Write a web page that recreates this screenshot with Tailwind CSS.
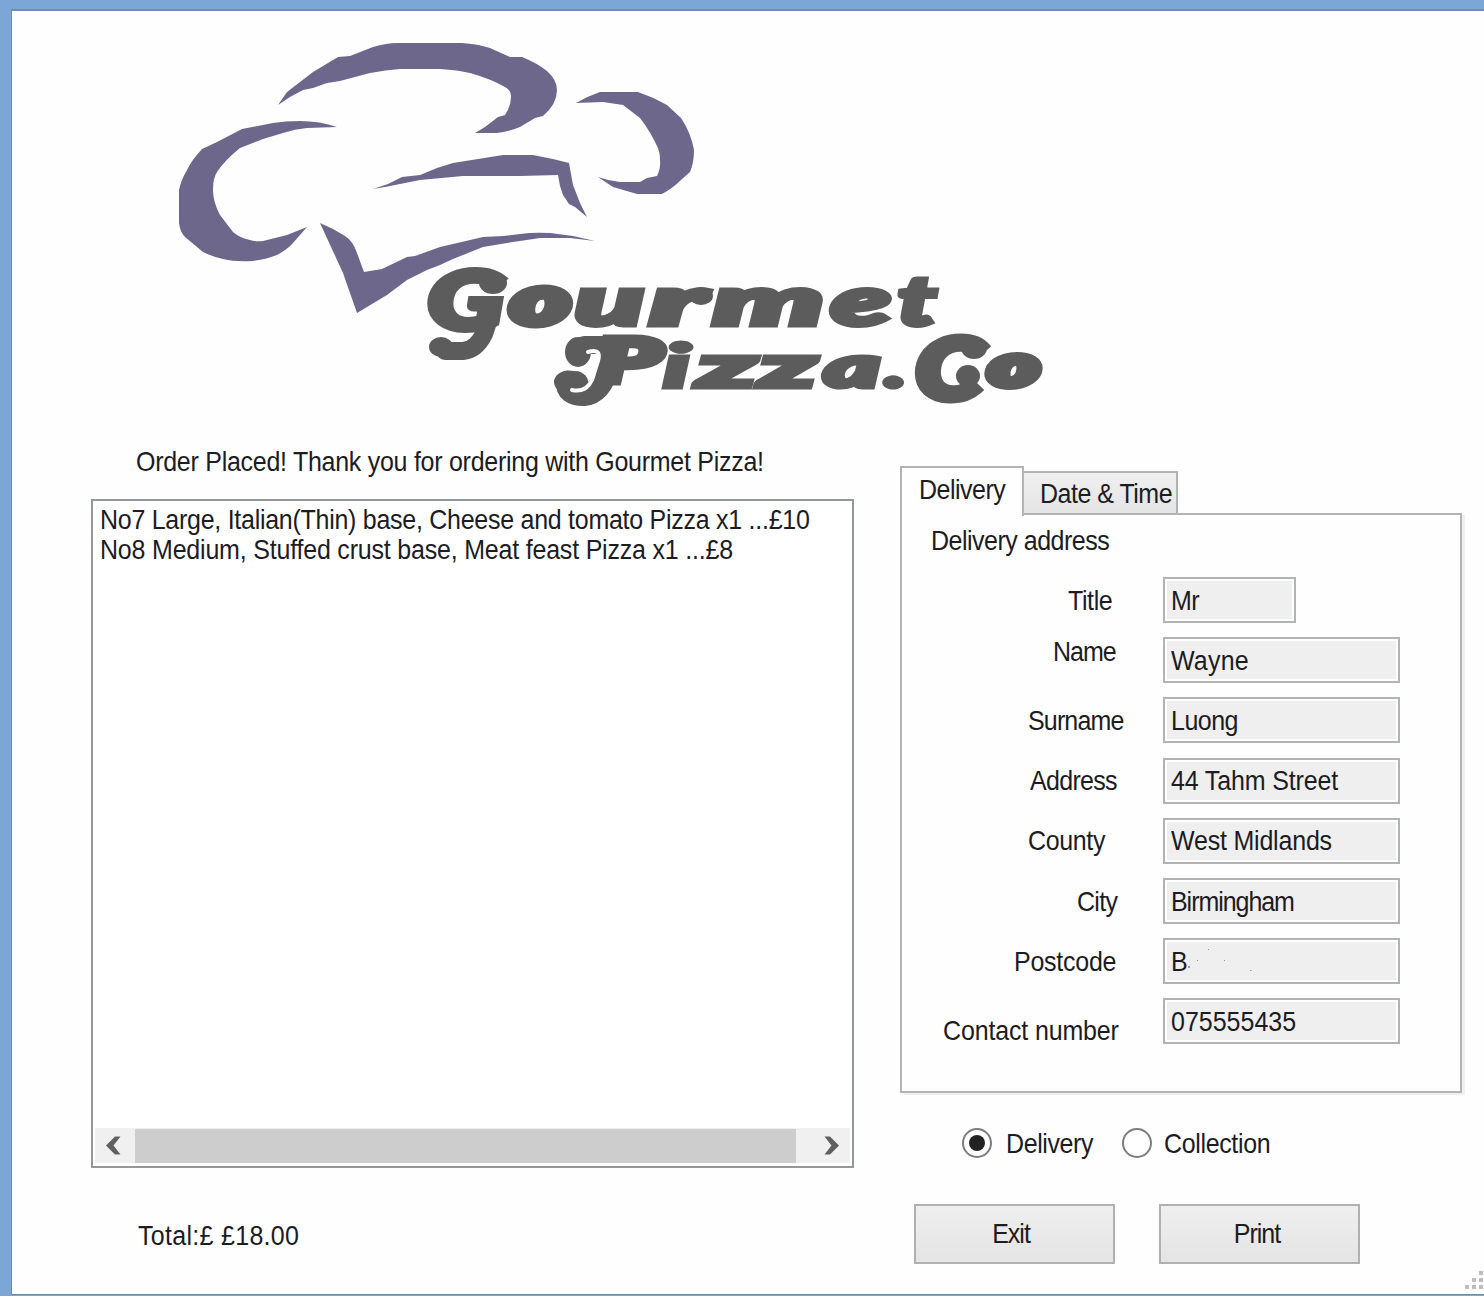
<!DOCTYPE html>
<html lang="en">
<head>
<meta charset="utf-8">
<title>Gourmet Pizza</title>
<script src="https://cdn.jsdelivr.net/npm/@tailwindcss/browser@4"></script>
</head>
<body class="w-[1484px] h-[1296px] overflow-hidden bg-[#7ba6d6] pl-[11px] pt-[9px] font-['Liberation_Sans',sans-serif] text-[25px] leading-[30px] text-[#1c1c22] whitespace-nowrap">
<main class="relative w-[1473px] h-[1286px] border-t-2 border-l border-b border-[#6a8db3] bg-[#fefefe]">
  <svg class="block w-[1472px] h-[424px]" viewBox="12 11 1472 424" role="img" aria-label="Gourmet Pizza.Co">
    <g fill="#6e678c">
      <path d="M278 105L287 92L313 72L338 57L350 56L373 47Q387 43 397 43H462Q478 44 490 48L510 57H522Q537 63 547 71Q557 80 557 90Q557 104 543 116L535 118L520 127Q508 132 497 133H475L485 127L498 117L505 115Q511 106 511 97Q511 90 505 87Q491 79 470 73Q458 70 440 69H400Q386 70 370 73L340 81L327 83L313 88L303 90L290 97Z"/>
      <path d="M337 127Q320 121 300 121Q285 121 273 123L242 129L217 142L202 149Q191 161 187 170Q181 180 179 190V223Q180 232 185 237L203 252Q213 257 223 259Q235 262 253 261Q267 259 277 255Q288 249 293 243L307 227L287 235L263 241Q255 242 250 240Q240 238 233 232L220 215Q213 202 213 190Q213 178 217 172Q225 160 240 148L263 139L283 133Q295 129 307 128Z"/>
      <path d="M320 223L333 229L345 236Q353 241 357 253L364 272L382 269L407 257L415 256L440 247L453 244L483 237L503 236L520 234Q534 232 550 233L573 236L595 241L570 238H540L507 243L483 247L453 259L440 265L427 270L407 280L387 295L367 307L357 313L343 273Z"/>
      <path d="M373 189L388 184L402 177L420 175L437 168L453 163L503 155H533L553 159L569 163L573 185L580 203L587 217L575 207L569 204L563 195L560 186L558 175L520 176H463L420 180L385 187Z"/>
      <path d="M576 103Q588 96 600 92H638Q653 97 667 105L681 118Q691 133 694 150Q694 163 690 172L681 180Q673 188 662 194H637L613 187L598 177Q609 181 620 182H640L647 178L657 176Q661 168 660 160Q660 152 657 146Q650 131 640 118L623 105L603 102Z"/>
    </g>
    <g fill="#5c5c5c" stroke="#5c5c5c" stroke-width="5" font-family="Lato, sans-serif" font-weight="900" font-style="italic" font-size="68">
      <text x="428" y="329" font-size="80" stroke-width="7" textLength="75" lengthAdjust="spacingAndGlyphs">G</text>
      <text x="511" y="324" stroke-width="8" textLength="59" lengthAdjust="spacingAndGlyphs">o</text>
      <text x="575" y="325" textLength="69" lengthAdjust="spacingAndGlyphs">u</text>
      <text x="650" y="325" textLength="55" lengthAdjust="spacingAndGlyphs">r</text>
      <text x="713" y="325" textLength="111" lengthAdjust="spacingAndGlyphs">m</text>
      <text x="831" y="325" textLength="60" lengthAdjust="spacingAndGlyphs">e</text>
      <text x="898" y="325" textLength="38" lengthAdjust="spacingAndGlyphs">t</text>
      <g font-size="58">
        <text x="595" y="382" font-size="60" stroke-width="7" textLength="66" lengthAdjust="spacingAndGlyphs">P</text>
        <text x="662" y="388" stroke-width="3" font-size="60" textLength="29" lengthAdjust="spacingAndGlyphs">i</text>
        <text x="698" y="387" textLength="58" lengthAdjust="spacingAndGlyphs">z</text>
        <text x="760" y="387" textLength="56" lengthAdjust="spacingAndGlyphs">z</text>
        <text x="824" y="387" textLength="56" lengthAdjust="spacingAndGlyphs">a</text>
        <text x="885" y="387" textLength="21" lengthAdjust="spacingAndGlyphs">.</text>
        <text x="916" y="399" font-size="83" stroke-width="8" textLength="66" lengthAdjust="spacingAndGlyphs">C</text>
        <text x="989" y="386" stroke-width="8" textLength="50" lengthAdjust="spacingAndGlyphs">o</text>
      </g>
    </g>
    <g fill="#5c5c5c">
      <ellipse cx="493" cy="283" rx="14" ry="11"/>
      <ellipse cx="701" cy="296" rx="12" ry="9"/>
      <ellipse cx="974" cy="348" rx="13" ry="11"/>
      <ellipse cx="968" cy="376" rx="12" ry="11"/>
      <ellipse cx="441" cy="347" rx="12" ry="10"/>
    </g>
    <g fill="none" stroke="#5c5c5c" stroke-linecap="round">
      <path stroke-width="18" d="M492 310L484 334Q476 350 463 351H445"/>
      <path stroke-width="22" d="M608 366Q602 393 584 395Q566 395 567 382"/>
      <ellipse cx="578" cy="352" rx="13" ry="15" fill="#5c5c5c" stroke="none"/>
      <path stroke-width="18" d="M584 345H618"/>
      <ellipse cx="571" cy="382" rx="17" ry="12" fill="#5c5c5c" stroke="none"/>
      <path stroke="#fefefe" stroke-width="4" d="M588 352Q602 348 598 361L592 380Q586 393 572 390"/>
      <path stroke="#fefefe" stroke-width="2" d="M566 369Q580 372 592 367"/>
    </g>
  </svg>

  <div class="flex">
    <section class="w-[763px] ml-[79px]">
      <p class="ml-[45px] mt-[11px] h-[53px]"><span class="inline-block scale-y-110 tracking-[-0.27px]">Order Placed! Thank you for ordering with Gourmet Pizza!</span></p>
      <div class="flex h-[669px] flex-col justify-between border-2 border-[#94979b] bg-white">
        <ul class="pl-[7px] pt-[3px]">
          <li><span class="inline-block scale-y-110 tracking-[-0.27px]">No7 Large, Italian(Thin) base, Cheese and tomato Pizza x1 ...£10</span></li>
          <li><span class="inline-block scale-y-110 tracking-[-0.2px]">No8 Medium, Stuffed crust base, Meat feast Pizza x1 ...£8</span></li>
        </ul>
        <div class="mx-[2px] mb-[3px] flex h-[35px] items-center bg-[#f0f0f0]">
          <svg class="h-[35px] w-[40px]" viewBox="0 0 40 35"><path d="M11 17.500L20 8.500H25.500L18.500 17.500L25.500 26.500H20Z" fill="#606060"/></svg>
          <div class="h-[34px] w-[661px] bg-[#cdcdcd]"></div>
          <svg class="h-[35px] w-[54px]" viewBox="0 0 54 35"><path d="M43 17.500L34 8.500H28.500L35.500 17.500L28.500 26.500H34Z" fill="#606060"/></svg>
        </div>
      </div>
      <p class="ml-[47px] mt-[52px]"><span class="inline-block scale-y-110 tracking-[0.3px]">Total:£ £18.00</span></p>
    </section>

    <section class="ml-[46px] mt-[31px] w-[563px]">
      <div class="flex h-[47px] items-end">
        <div class="relative z-10 h-[50px] w-[124px] -mb-[3px] border-2 border-b-0 border-[#b3b3b3] bg-[#fefefe] pl-[17px] pt-[6px]"><span class="inline-block scale-y-110 tracking-[-0.5px]">Delivery</span></div>
        <div class="h-[42px] w-[154px] border-2 border-l-0 border-b-0 border-[#b3b3b3] bg-linear-to-b from-[#f0f0f0] to-[#e4e4e4] pl-[16px] pt-[5px]"><span class="inline-block scale-y-110 tracking-[-0.5px]">Date &amp; Time</span></div>
      </div>
      <div class="h-[580px] w-[562px] border-2 border-[#b3b3b3] shadow-[3px_2px_0_#f0f0f0] pt-[10px]">
        <p class="h-[52px] pl-[29px]"><span class="inline-block scale-y-110 tracking-[-0.5px]">Delivery address</span></p>
        <div class="flex h-[60.2px]"><label class="w-[261px] pl-[166px] pt-[8px]"><span class="inline-block scale-y-110 tracking-[-0.4px]">Title</span></label><div class="h-[46px] w-[133px] border-2 border-[#b0b2b5] bg-[#efefef] pl-[6px] pt-[6px] shadow-[inset_0_0_0_2px_#fefefe]"><span class="inline-block scale-y-110 tracking-[-0.5px]">Mr</span></div></div>
        <div class="flex h-[60.2px]"><label class="w-[261px] pl-[151px] -mt-[1px]"><span class="inline-block scale-y-110 tracking-[-1px]">Name</span></label><div class="h-[46px] w-[237px] border-2 border-[#b0b2b5] bg-[#efefef] pl-[6px] pt-[6px] shadow-[inset_0_0_0_2px_#fefefe]"><span class="inline-block scale-y-110 tracking-[0.2px]">Wayne</span></div></div>
        <div class="flex h-[60.2px]"><label class="w-[261px] pl-[126px] pt-[8px]"><span class="inline-block scale-y-110 tracking-[-0.85px]">Surname</span></label><div class="h-[46px] w-[237px] border-2 border-[#b0b2b5] bg-[#efefef] pl-[6px] pt-[6px] shadow-[inset_0_0_0_2px_#fefefe]"><span class="inline-block scale-y-110 tracking-[-0.5px]">Luong</span></div></div>
        <div class="flex h-[60.2px]"><label class="w-[261px] pl-[128px] pt-[7px]"><span class="inline-block scale-y-110 tracking-[-0.7px]">Address</span></label><div class="h-[46px] w-[237px] border-2 border-[#b0b2b5] bg-[#efefef] pl-[6px] pt-[5px] shadow-[inset_0_0_0_2px_#fefefe]"><span class="inline-block scale-y-110 tracking-[-0.15px]">44 Tahm Street</span></div></div>
        <div class="flex h-[60.2px]"><label class="w-[261px] pl-[126px] pt-[7px]"><span class="inline-block scale-y-110 tracking-[-0.35px]">County</span></label><div class="h-[46px] w-[237px] border-2 border-[#b0b2b5] bg-[#efefef] pl-[6px] pt-[5px] shadow-[inset_0_0_0_2px_#fefefe]"><span class="inline-block scale-y-110 tracking-[-0.2px]">West Midlands</span></div></div>
        <div class="flex h-[60.2px]"><label class="w-[261px] pl-[175px] pt-[8px]"><span class="inline-block scale-y-110 tracking-[-0.7px]">City</span></label><div class="h-[46px] w-[237px] border-2 border-[#b0b2b5] bg-[#efefef] pl-[6px] pt-[6px] shadow-[inset_0_0_0_2px_#fefefe]"><span class="inline-block scale-y-110 tracking-[-1.05px]">Birmingham</span></div></div>
        <div class="flex h-[60.2px]"><label class="w-[261px] pl-[112px] pt-[8px]"><span class="inline-block scale-y-110 tracking-[-0.25px]">Postcode</span></label><div class="h-[46px] w-[237px] border-2 border-[#b0b2b5] bg-[#efefef] pl-[6px] pt-[6px] shadow-[inset_0_0_0_2px_#fefefe]"><span class="inline-block scale-y-110">B</span><svg class="inline-block h-[30px] w-[80px] align-top" viewBox="0 0 80 30" fill="#999"><path d="M0 20h2v2h-2zM9 14h1v1h-1zM20 3h1v1h-1zM36 14h1v1h-1zM62 24h1.500v1h-1.500z"/></svg></div></div>
        <div class="flex h-[60.2px]"><label class="w-[261px] pl-[41px] pt-[17px]"><span class="inline-block scale-y-110 tracking-[-0.15px]">Contact number</span></label><div class="h-[46px] w-[237px] border-2 border-[#b0b2b5] bg-[#efefef] pl-[6px] pt-[6px] shadow-[inset_0_0_0_2px_#fefefe]"><span class="inline-block scale-y-110">075555435</span></div></div>
      </div>
      <div class="flex items-center pl-[61px] mt-[34px] h-[32px]">
        <svg class="h-[32px] w-[32px]" viewBox="0 0 32 32"><circle cx="16" cy="16" r="14" fill="#fff" stroke="#7d7d7d" stroke-width="2"/><circle cx="16" cy="16" r="8" fill="#222"/></svg>
        <span class="ml-[13px] w-[87px] inline-block scale-y-110 tracking-[-0.4px]">Delivery</span>
        <svg class="ml-[28px] h-[32px] w-[32px]" viewBox="0 0 32 32"><circle cx="16" cy="16" r="14" fill="#fff" stroke="#7d7d7d" stroke-width="2"/></svg>
        <span class="ml-[11px] inline-block scale-y-110 tracking-[-0.35px]">Collection</span>
      </div>
      <div class="flex gap-[44px] pl-[14px] mt-[45px]">
        <button class="h-[60px] w-[201px] border-2 border-[#b0b0b0] bg-linear-to-b from-[#efefef] to-[#e4e4e4] pb-[2px] pr-[7px]"><span class="inline-block scale-y-110 tracking-[-1px]">Exit</span></button>
        <button class="h-[60px] w-[201px] border-2 border-[#b0b0b0] bg-linear-to-b from-[#efefef] to-[#e4e4e4] pb-[2px] pr-[5px]"><span class="inline-block scale-y-110 tracking-[-1px]">Print</span></button>
      </div>
    </section>
  </div>
  <svg class="absolute right-0 bottom-[4px] h-[20px] w-[20px]" viewBox="0 0 20 20" fill="#bdbdbd"><path d="M1 15h4v4h-4zM8 15h4v4h-4zM15 15h4v4h-4zM8 8h4v4h-4zM15 8h4v4h-4zM15 1h4v4h-4z"/></svg>
</main>
</body>
</html>
